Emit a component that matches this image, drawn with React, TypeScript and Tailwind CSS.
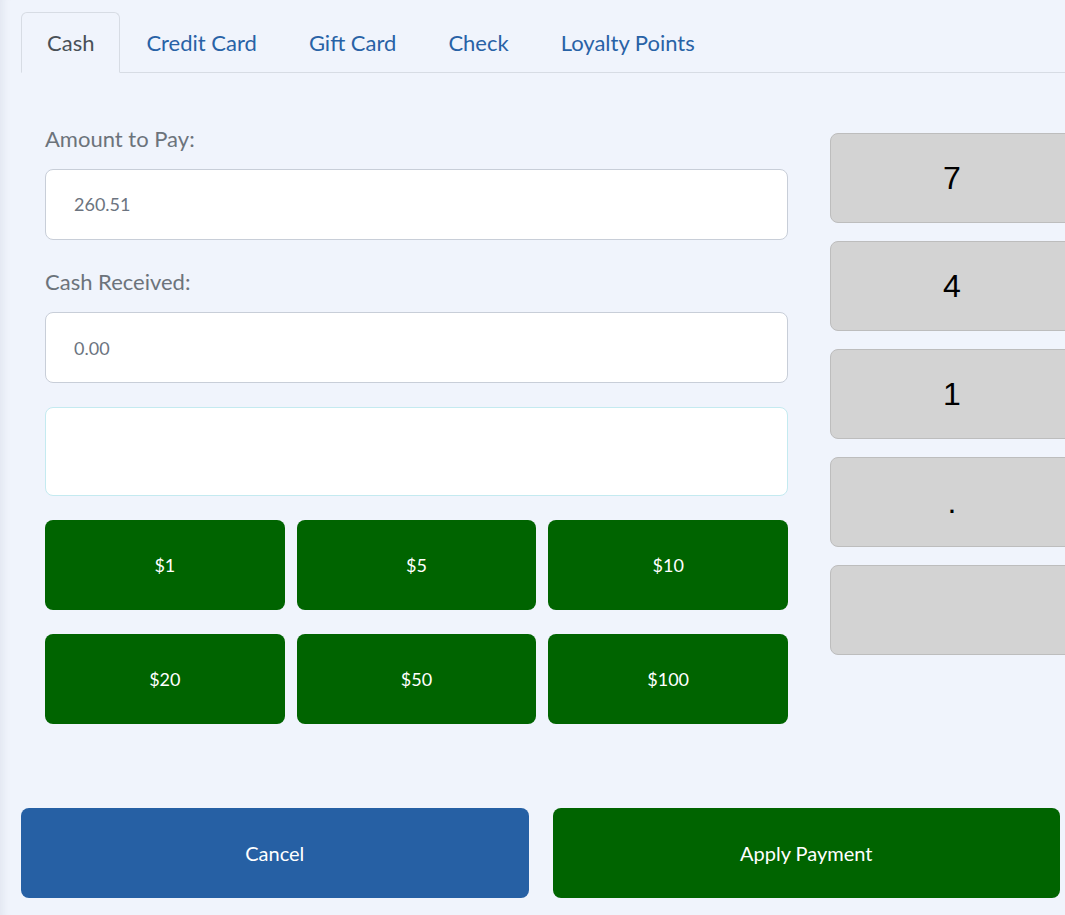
import React, { useState } from "react";

const TABS = ["Cash", "Credit Card", "Gift Card", "Check", "Loyalty Points"];
const QUICK_CASH = ["$1", "$5", "$10", "$20", "$50", "$100"];
const KEYPAD = ["7", "4", "1", ".", ""];

const App: React.FC = () => {
  const [activeTab, setActiveTab] = useState("Cash");
  const [cashReceived, setCashReceived] = useState("0.00");

  return (
    <div
      className="w-[1065px] h-[915px] overflow-hidden bg-[#f0f4fc] shadow-[inset_10px_0_10px_-8px_rgba(30,40,70,0.08)] pt-3 pl-[21px]"
      style={{ fontFamily: "Lato, 'Noto Sans', sans-serif" }}
    >
      {/* Tabs */}
      <div className="flex border-b border-[#d7dce4] h-[61px]">
        {TABS.map((tab) => {
          const active = tab === activeTab;
          return (
            <button
              key={tab}
              onClick={() => setActiveTab(tab)}
              className={
                active
                  ? "h-[61px] px-[25px] -mb-px border border-[#d7dce4] border-b-[#f0f4fc] rounded-t-md text-[22px] text-[#495057]"
                  : "h-[61px] px-[25px] -mb-px border border-transparent text-[22px] text-[#2862a6]"
              }
            >
              {tab}
            </button>
          );
        })}
      </div>

      {/* Body */}
      <div className="flex items-start pl-6 pt-[54px]">
        {/* Left column */}
        <div className="w-[743px] shrink-0">
          <label className="block text-[22px] leading-6 text-[#6c737b] mb-[18px]">Amount to Pay:</label>
          <div className="h-[71px] bg-white border border-[#c8ced8] rounded-lg flex items-center px-7 text-[18px] text-[#6c7480]">
            260.51
          </div>

          <label className="block text-[22px] leading-6 text-[#6c737b] mt-[30px] mb-[18px]">Cash Received:</label>
          <input
            value={cashReceived}
            onChange={(e) => setCashReceived(e.target.value)}
            className="block w-full h-[71px] bg-white border border-[#c8ced8] rounded-lg px-7 text-[18px] text-[#6c7480] outline-none"
          />

          <div className="h-[89px] mt-6 bg-white border border-[#c4eaf0] rounded-lg" />

          <div className="grid grid-cols-3 gap-x-3 gap-y-6 mt-6">
            {QUICK_CASH.map((amt) => (
              <button
                key={amt}
                onClick={() => setCashReceived(amt.slice(1) + ".00")}
                className="h-[90px] bg-[#006400] rounded-lg text-white text-[18px]"
              >
                {amt}
              </button>
            ))}
          </div>
        </div>

        {/* Keypad */}
        <div className="ml-[42px] mt-[6px] w-[244px] shrink-0 flex flex-col gap-[18px]">
          {KEYPAD.map((k, i) => (
            <button
              key={i}
              className="h-[90px] bg-[#d3d3d3] border border-[#bdbdbd] rounded-lg text-[32px] text-black"
              style={{ fontFamily: "'Liberation Sans', Arial, sans-serif" }}
            >
              {k}
            </button>
          ))}
        </div>
      </div>

      {/* Footer actions */}
      <div className="w-[1039px] grid grid-cols-2 gap-6 mt-[84px]">
        <button className="h-[90px] bg-[#2660a4] rounded-lg text-white text-[20px]">Cancel</button>
        <button className="h-[90px] bg-[#006400] rounded-lg text-white text-[20px]">Apply Payment</button>
      </div>
    </div>
  );
};

export default App;
